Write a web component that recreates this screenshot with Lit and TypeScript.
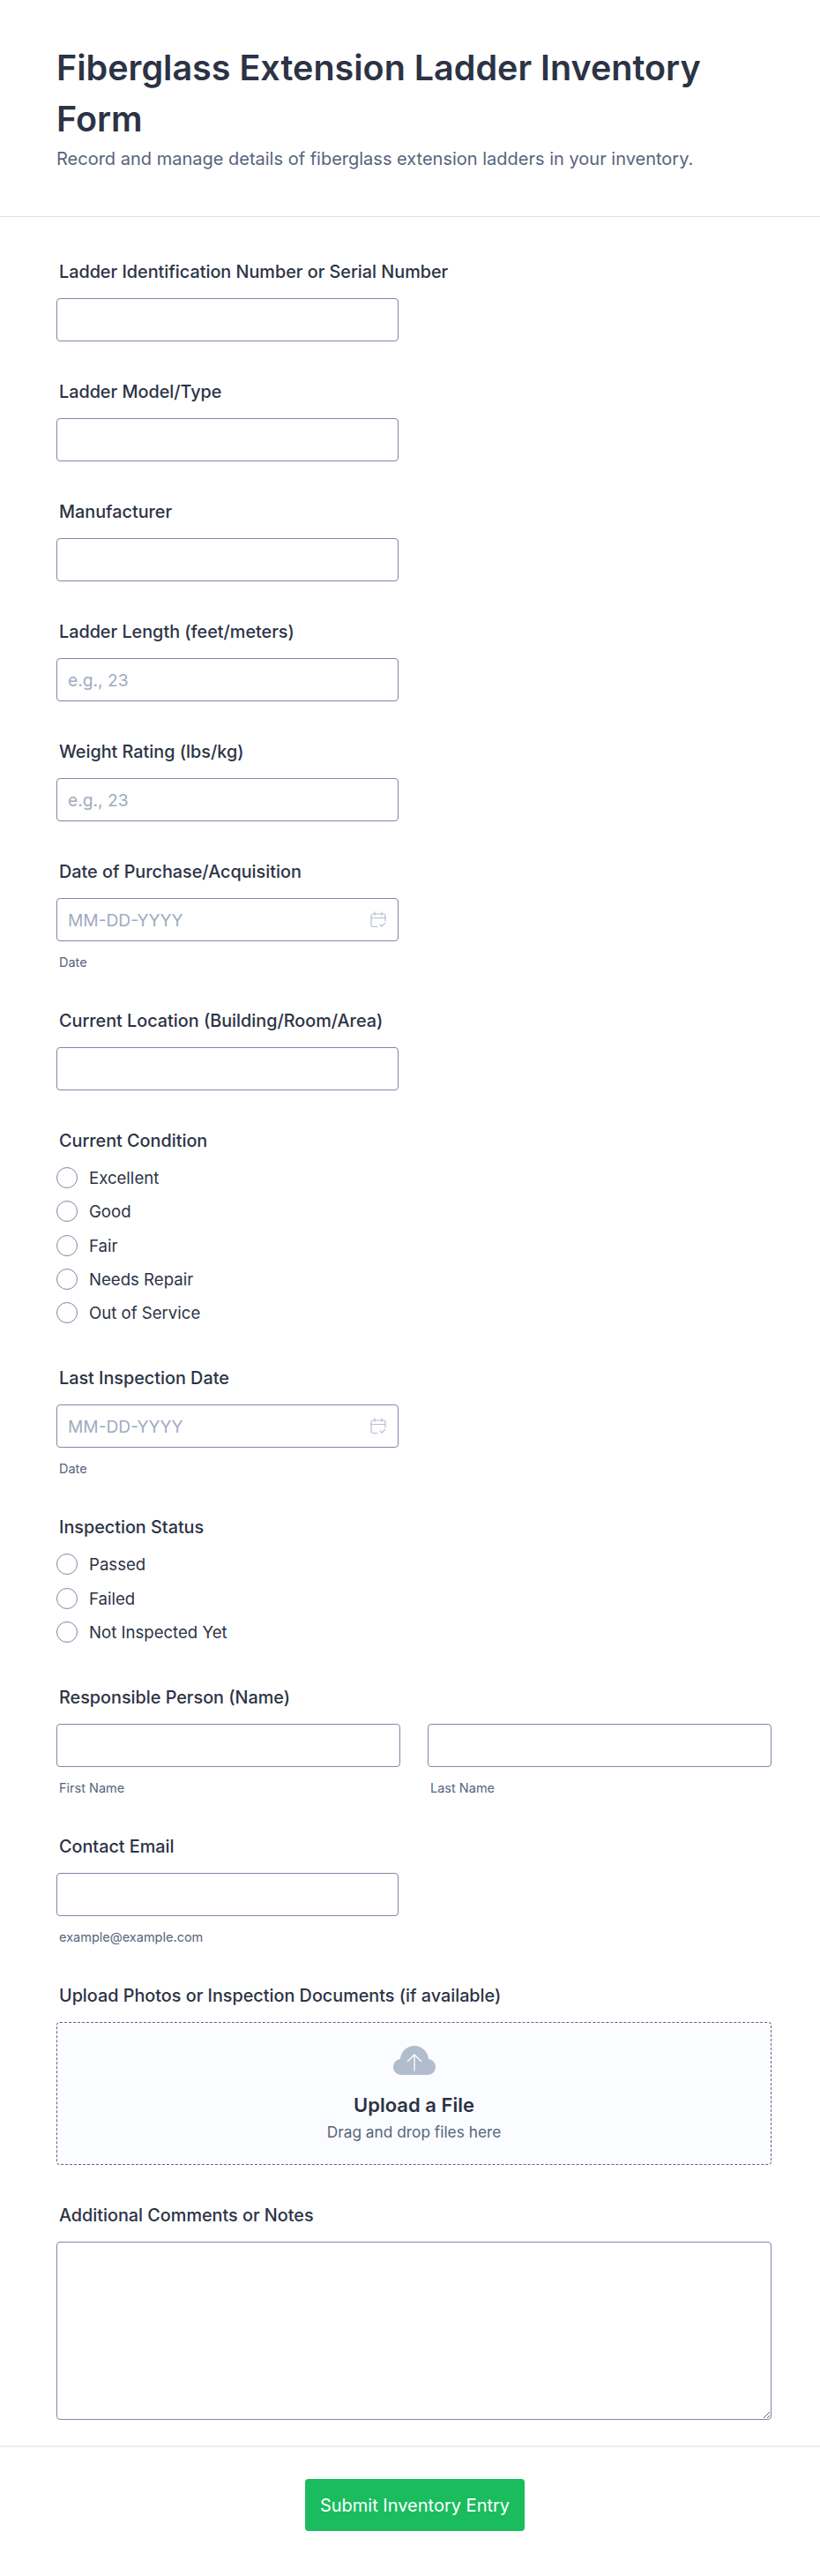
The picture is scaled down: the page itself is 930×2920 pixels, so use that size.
import { LitElement, html, css } from "lit";
import { customElement } from "lit/decorators.js";

const calendar = html`<svg class="cal" viewBox="0 0 18 19" width="18" height="19" fill="none" stroke="#b4bdcf" stroke-width="1.2" stroke-linecap="round" stroke-linejoin="round"><path d="M8 17.5H3a2 2 0 0 1-2-2V5a2 2 0 0 1 2-2h12a2 2 0 0 1 2 2v6"/><path d="M1 7.500h16M5 .8v3.400M13 .8v3.400"/><path d="M11 15.200l1.900 1.900 3.800-3.800"/></svg>`;

const cloud = html`<svg viewBox="0 0 48 33" width="48" height="33"><path fill="#b1bccd" d="M9.500 33C4 33 0 29 0 24c0-4.700 3.400-8.300 7.800-9C9 6.500 15.500 0 24 0s15 6.500 16.200 15c4.400.7 7.800 4.300 7.800 9 0 5-4 9-9.500 9z"/><path fill="none" stroke="#fff" stroke-width="1.300" stroke-linecap="round" stroke-linejoin="round" d="M24 28V10M16.500 17.500 24 10l7.500 7.500"/></svg>`;

@customElement("app-root")
export class AppRoot extends LitElement {
  static styles = css`
    :host { display: block; width: 930px; background: #fff; color: #2c3345; font-family: Inter, "Liberation Sans", sans-serif; }
    * { box-sizing: border-box; }
    header { height: 246px; padding: 48px 64px 0; border-bottom: 1px solid #dcdfe8; }
    h1 { margin: 0; font-size: 39.500px; line-height: 58px; font-weight: 600; color: #2c3345; }
    .sub { margin: 2px 0 0; font-size: 20px; line-height: 28px; color: #57647e; }
    main { padding: 48px 55px 0 64px; }
    .field { display: block; margin-bottom: 43px; }
    .field:last-child { margin-bottom: 29px; }
    .label { display: block; font-size: 19.800px; line-height: 28px; font-weight: 450; padding-left: 3px; margin-bottom: 16px; color: #2c3345; }
    .input { display: block; width: 388px; height: 49px; border: 1px solid #7f87a3; border-radius: 4px; background: #fff; padding: 0 12px; font: 19.200px Inter, sans-serif; color: #2c3345; outline: none; }
    .input::placeholder { color: #a0abc0; opacity: 1; }
    .date { position: relative; width: 388px; }
    .cal { position: absolute; right: 14px; top: 15px; }
    .hint { display: block; font-size: 14.500px; line-height: 18px; color: #57647e; padding-left: 3px; margin-top: 15px; }
    .opts { display: flex; flex-direction: column; gap: 14.300px; padding-bottom: 5.300px; }
    .opt { display: flex; align-items: center; gap: 13px; height: 24px; font-size: 18.600px; color: #2c3345; }
    .radio { width: 24px; height: 24px; border-radius: 50%; border: 1px solid #7f87a3; background: #fff; flex: none; }
    .row { display: grid; grid-template-columns: 390px 390px; gap: 31px; }
    .row .input { width: 100%; }
    .upload { width: 811px; height: 162px; border: 1px dashed #5e6680; border-radius: 4px; background: #fbfcff; display: flex; flex-direction: column; align-items: center; padding-top: 26px; }
    .up-title { font-size: 22px; line-height: 30px; font-weight: 600; margin-top: 19px; }
    .up-sub { font-size: 17.300px; line-height: 24px; color: #57647e; margin-top: 4px; }
    textarea.input { width: 811px; height: 202px; resize: both; padding: 12px; }
    footer { border-top: 2px solid #eceef4; padding: 36px 0 0 11px; height: 147px; display: flex; justify-content: center; align-items: flex-start; }
    button { width: 249px; height: 59px; border: 0; border-radius: 4px; background: #1abc5e; color: #fff; font: 400 20px Inter, sans-serif; padding: 0; }
  `;

  private text(label: string) {
    return html`<div class="field"><label class="label">${label}</label><input class="input" type="text" /></div>`;
  }
  private num(label: string) {
    return html`<div class="field"><label class="label">${label}</label><input class="input" type="text" placeholder="e.g., 23" /></div>`;
  }
  private dateField(label: string) {
    return html`<div class="field"><label class="label">${label}</label><div class="date"><input class="input" type="text" placeholder="MM-DD-YYYY" />${calendar}</div><span class="hint">Date</span></div>`;
  }
  private radios(label: string, opts: string[]) {
    return html`<div class="field"><label class="label">${label}</label><div class="opts">${opts.map((o) => html`<div class="opt"><span class="radio"></span>${o}</div>`)}</div></div>`;
  }

  render() {
    return html`
      <header>
        <h1>Fiberglass Extension Ladder Inventory Form</h1>
        <p class="sub">Record and manage details of fiberglass extension ladders in your inventory.</p>
      </header>
      <main>
        ${this.text("Ladder Identification Number or Serial Number")}
        ${this.text("Ladder Model/Type")}
        ${this.text("Manufacturer")}
        ${this.num("Ladder Length (feet/meters)")}
        ${this.num("Weight Rating (lbs/kg)")}
        ${this.dateField("Date of Purchase/Acquisition")}
        ${this.text("Current Location (Building/Room/Area)")}
        ${this.radios("Current Condition", ["Excellent", "Good", "Fair", "Needs Repair", "Out of Service"])}
        ${this.dateField("Last Inspection Date")}
        ${this.radios("Inspection Status", ["Passed", "Failed", "Not Inspected Yet"])}
        <div class="field">
          <label class="label">Responsible Person (Name)</label>
          <div class="row">
            <div><input class="input" type="text" /><span class="hint">First Name</span></div>
            <div><input class="input" type="text" /><span class="hint">Last Name</span></div>
          </div>
        </div>
        <div class="field">
          <label class="label">Contact Email</label>
          <input class="input" type="text" />
          <span class="hint">example@example.com</span>
        </div>
        <div class="field">
          <label class="label">Upload Photos or Inspection Documents (if available)</label>
          <div class="upload">
            ${cloud}
            <div class="up-title">Upload a File</div>
            <div class="up-sub">Drag and drop files here</div>
          </div>
        </div>
        <div class="field">
          <label class="label">Additional Comments or Notes</label>
          <textarea class="input"></textarea>
        </div>
      </main>
      <footer><button>Submit Inventory Entry</button></footer>
    `;
  }
}
